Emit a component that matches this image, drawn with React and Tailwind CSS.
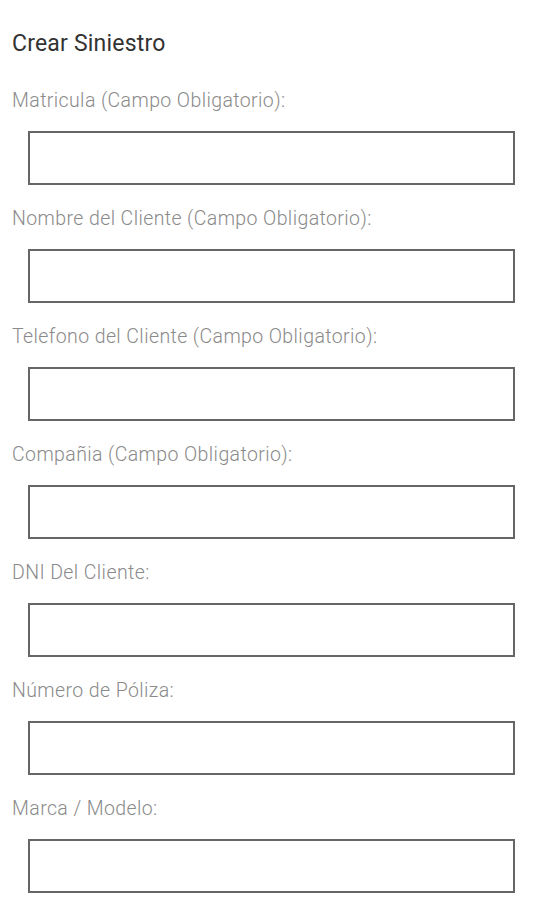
import React from "react";

const fields = [
  "Matricula (Campo Obligatorio):",
  "Nombre del Cliente (Campo Obligatorio):",
  "Telefono del Cliente (Campo Obligatorio):",
  "Compañia (Campo Obligatorio):",
  "DNI Del Cliente:",
  "Número de Póliza:",
  "Marca / Modelo:",
];

export default function App() {
  return (
    <div
      className="min-h-screen bg-white px-3 pt-[30px]"
      style={{ fontFamily: "Roboto, 'Liberation Sans', sans-serif" }}
    >
      <h1 className="text-[23px] leading-[28px] tracking-[0.2px] text-[#333] font-normal">Crear Siniestro</h1>

      <div className="mt-[33px] flex flex-col">
        {fields.map((label, i) => (
          <div key={i} className="flex flex-col">
            <label className="text-[19.5px] leading-[20px] tracking-[0.4px] font-light text-[#8a8a8a]">{label}</label>
            <input
              type="text"
              className="mt-5 mb-6 ml-4 h-[54px] w-[487px] border-2 border-[#666] bg-white outline-none"
            />
          </div>
        ))}
      </div>
    </div>
  );
}
